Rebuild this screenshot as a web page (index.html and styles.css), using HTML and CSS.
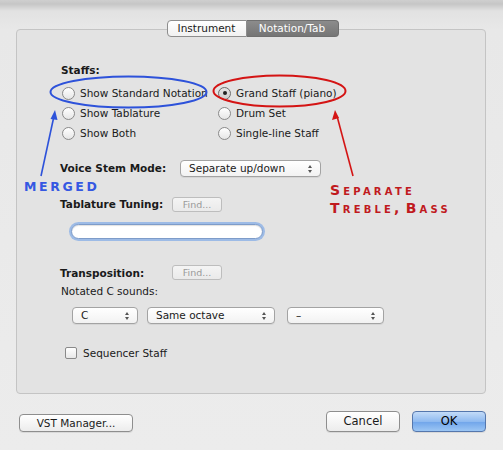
FILE: index.html
```html
<!DOCTYPE html>
<html lang="en">

<head>
    <meta charset="UTF-8">
    <title>Score Setup</title>
    <link rel="stylesheet" href="styles.css">
</head>

<body>
    <div class="window">
        <div class="panel">
            <div class="tabs">
                <span class="tab">Instrument</span>
                <span class="tab active">Notation/Tab</span>
            </div>

            <div class="content">
                <div class="bold staffs">Staffs:</div>
                <div class="radios">
                    <div class="radio"><span class="dot"></span>Show Standard Notation</div>
                    <div class="radio checked"><span class="dot"></span>Grand Staff (piano)</div>
                    <div class="radio"><span class="dot"></span>Show Tablature</div>
                    <div class="radio"><span class="dot"></span>Drum Set</div>
                    <div class="radio"><span class="dot"></span>Show Both</div>
                    <div class="radio"><span class="dot"></span>Single-line Staff</div>
                </div>

                <div class="row voice">
                    <span class="bold name wide">Voice Stem Mode:</span>
                    <span class="select stem">Separate up/down<i class="arrows"></i></span>
                </div>

                <div class="row tuning">
                    <span class="bold name">Tablature Tuning:</span>
                    <span class="find">Find...</span>
                </div>

                <div class="field"></div>

                <div class="row transpose">
                    <span class="bold name">Transposition:</span>
                    <span class="find">Find...</span>
                </div>
                <div class="notated">Notated C sounds:</div>

                <div class="row pickers">
                    <span class="select pitch">C<i class="arrows"></i></span>
                    <span class="select octave">Same octave<i class="arrows"></i></span>
                    <span class="select extra">–<i class="arrows"></i></span>
                </div>

                <div class="check"><span class="box"></span>Sequencer Staff</div>
            </div>
        </div>

        <div class="footer">
            <span class="button vst">VST Manager...</span>
            <span class="spacer"></span>
            <span class="button big">Cancel</span>
            <span class="button big ok">OK</span>
        </div>
    </div>

    <!-- hand drawn notes on top of the dialog -->
    <svg class="marks" width="503" height="450" viewBox="0 0 503 450">
        <ellipse cx="128.5" cy="92" rx="78" ry="15.5" fill="none" stroke="#2d52da" stroke-width="2" />
        <ellipse cx="279.5" cy="91" rx="66" ry="15.5" fill="none" stroke="#d41414" stroke-width="2" />
        <line x1="41" y1="176" x2="54" y2="116" stroke="#2d52da" stroke-width="1.6" />
        <polygon points="55,110 50.5,119 57.5,120" fill="#2d52da" />
        <line x1="353" y1="176" x2="337" y2="116" stroke="#d41414" stroke-width="1.6" />
        <polygon points="335,110 332,120 339,118" fill="#d41414" />
    </svg>
    <div class="scribble merged">Merged</div>
    <div class="scribble separate">Separate<br>Treble, Bass</div>
</body>

</html>
```

FILE: styles.css
```css
body {
    margin: 0;
    width: 503px;
    height: 450px;
    overflow: hidden;
    font-family: "DejaVu Sans", Verdana, sans-serif;
    font-size: 10.5px;
    color: #1a1a1a;
    background: linear-gradient(#cfcfcf 0px, #c6c6c6 4px, #e2e2e2 11px, #e8e8e8 30px, #ececec 100%);
    position: relative;
}

.window {
    padding-top: 29px;
}

.panel {
    margin: 0 17px 0 16px;
    height: 365px;
    box-sizing: border-box;
    border: 1px solid #c4c4c4;
    border-radius: 4px;
    background-color: #e3e3e3;
}

.bold {
    font-weight: bold;
}

/* segmented tabs */
.tabs {
    display: flex;
    justify-content: center;
    margin-top: -10px;
    margin-left: 3px;
}

.tab {
    height: 15px;
    line-height: 15px;
    width: 78px;
    text-align: center;
    border: 1px solid #8d8d8d;
    background: linear-gradient(#ffffff, #f1f1f1);
    border-radius: 4px 0 0 4px;
}

.tab.active {
    width: 91px;
    border-left: none;
    border-color: #6f6f6f;
    border-radius: 0 4px 4px 0;
    background: linear-gradient(#8c8c8c, #757575);
    color: #ffffff;
}

.content {
    padding: 25px 0 0 45px;
}

.staffs {
    height: 16px;
    line-height: 16px;
    margin-bottom: 5px;
    margin-left: -1px;
}

.radios {
    display: grid;
    grid-template-columns: 156px auto;
    grid-auto-rows: 20px;
}

.radio {
    display: flex;
    align-items: center;
    gap: 5px;
}

.dot {
    width: 11px;
    height: 11px;
    border-radius: 50%;
    border: 1px solid #8a8a8a;
    background: linear-gradient(#ffffff, #e6e6e6);
    display: flex;
    align-items: center;
    justify-content: center;
}

.checked .dot {
    background: linear-gradient(#e4e4e4, #cfcfcf);
    border-color: #6d6d6d;
}

.checked .dot::after {
    content: "";
    width: 4px;
    height: 4px;
    border-radius: 50%;
    background-color: #222222;
}

.row {
    display: flex;
    align-items: center;
    margin-left: -2px;
}

.name {
    width: 112px;
}

.name.wide {
    width: 120px;
}

.voice {
    margin-top: 16px;
    height: 18px;
}

.tuning {
    margin-top: 19px;
    height: 16px;
}

.transpose {
    margin-top: 26px;
    height: 15px;
}

.select {
    position: relative;
    box-sizing: border-box;
    height: 17px;
    line-height: 15px;
    padding-left: 8px;
    border: 1px solid #a3a3a3;
    border-radius: 4px;
    background: linear-gradient(#ffffff, #f2f2f2);
    box-shadow: 0 1px 0 rgba(0, 0, 0, 0.06);
}

.arrows {
    position: absolute;
    right: 7px;
    top: 4px;
    width: 5px;
    height: 8px;
}

.arrows::before,
.arrows::after {
    content: "";
    position: absolute;
    left: 0;
    border-left: 2.5px solid transparent;
    border-right: 2.5px solid transparent;
}

.arrows::before {
    top: 0;
    border-bottom: 3px solid #555555;
}

.arrows::after {
    bottom: 0;
    border-top: 3px solid #555555;
}

.stem {
    width: 141px;
}

.find {
    box-sizing: border-box;
    width: 50px;
    height: 15px;
    line-height: 13px;
    text-align: center;
    border: 1px solid #bdbdbd;
    border-radius: 3px;
    background: linear-gradient(#f4f4f4, #eaeaea);
    color: #9a9a9a;
    font-size: 9.5px;
}

.field {
    margin: 12px 0 0 9px;
    width: 190px;
    height: 13px;
    border: 1px solid #7e9cc9;
    border-radius: 8px;
    background-color: #ffffff;
    box-shadow: 0 0 0 2px #9dbbe6, inset 0 1px 1px rgba(0, 0, 0, 0.12);
}

.notated {
    margin-top: 4px;
    margin-left: -1px;
    height: 14px;
    line-height: 14px;
}

.pickers {
    margin-top: 9px;
    margin-left: 10px;
    gap: 9px;
}

.pitch {
    width: 66px;
}

.octave {
    width: 128px;
    margin-right: 3px;
}

.extra {
    width: 97px;
}

.check {
    display: flex;
    align-items: center;
    gap: 6px;
    margin-top: 21px;
    margin-left: 3px;
    height: 16px;
}

.box {
    width: 10px;
    height: 10px;
    border: 1px solid #8a8a8a;
    border-radius: 2px;
    background: linear-gradient(#ffffff, #e8e8e8);
}

/* bottom buttons */
.footer {
    display: flex;
    align-items: flex-start;
    margin-top: 17px;
    padding: 0 17px 0 19px;
}

.spacer {
    flex: 1;
}

.button {
    box-sizing: border-box;
    text-align: center;
    border: 1px solid #8e8e8e;
    border-radius: 4px;
    background: linear-gradient(#ffffff, #ececec);
    box-shadow: 0 1px 0 rgba(0, 0, 0, 0.08);
}

.vst {
    width: 114px;
    height: 18px;
    line-height: 16px;
    margin-top: 3px;
}

.big {
    width: 74px;
    height: 21px;
    line-height: 19px;
    font-size: 11.5px;
    margin-left: 12px;
}

.ok {
    border-color: #5577ad;
    background: linear-gradient(#c3dbf8, #8fbaf0 50%, #6fa4ea 51%, #9cc6f4);
    color: #000000;
}

/* annotations */
.marks {
    position: absolute;
    left: 0;
    top: 0;
}

.scribble {
    position: absolute;
    font-family: "DejaVu Sans", sans-serif;
    font-weight: bold;
    font-variant: small-caps;
    white-space: nowrap;
    line-height: 18px;
}

.merged {
    left: 24px;
    top: 178px;
    color: #3558e2;
    font-size: 12.5px;
    letter-spacing: 2.6px;
    text-transform: uppercase;
}

.separate {
    left: 330px;
    top: 181px;
    color: #c01a1e;
    font-size: 14px;
    letter-spacing: 3.2px;
    word-spacing: -5px;
}
```
